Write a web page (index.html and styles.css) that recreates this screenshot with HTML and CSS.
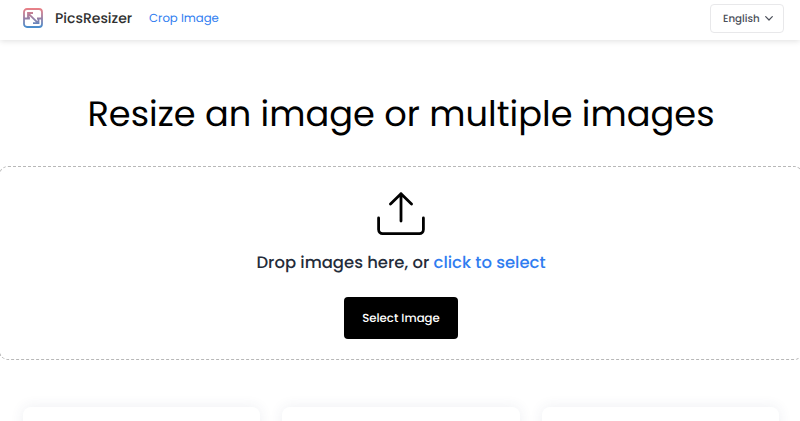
FILE: index.html
```html
<!DOCTYPE html>
<html lang="en">
<head>
<meta charset="utf-8">
<title>PicsResizer</title>
<link rel="stylesheet" href="styles.css">
</head>
<body>
<header class="header">
  <a class="brand">
    <svg class="logo" viewBox="0 0 20 20" fill="none" stroke="url(#g)" stroke-width="1.8">
      <defs><linearGradient id="g" gradientUnits="userSpaceOnUse" x1="0" y1="0" x2="0" y2="20"><stop offset="0" stop-color="#ee8085"/><stop offset=".48" stop-color="#9b7ea2"/><stop offset="1" stop-color="#438ed0"/></linearGradient></defs>
      <rect x="1" y="1" width="18" height="18" rx="3"/>
      <path d="M1 10.5h5v-2M19 10.5h-5M5 9.5V5h5M5.2 5.3l9.4 9.4M15.5 10v5.2h-5.5"/>
    </svg>
    <span class="name">PicsResizer</span>
  </a>
  <a class="nav">Crop Image</a>
  <button class="language"><span>English</span>
    <svg class="chevron" viewBox="0 0 8 5" fill="none" stroke="currentColor" stroke-width="1.2" stroke-linecap="round" stroke-linejoin="round"><path d="M.7.7 4 4 7.3.7"/></svg>
  </button>
</header>
<main>
  <h1 class="title">Resize an image or multiple images</h1>
  <section class="dropzone">
    <svg class="upload" viewBox="0 0 48 44" fill="none" stroke="#000" stroke-width="2.8" stroke-linecap="round" stroke-linejoin="round"><path d="M1.6 26v11.6a4 4 0 0 0 4 4h36.8a4 4 0 0 0 4-4V26M24 29V1.7M13.5 12 24 1.7 34.5 12"/></svg>
    <p class="prompt">Drop images here, or <a class="click">click to select</a></p>
    <button class="select">Select Image</button>
  </section>
  <section class="cards"><div class="card"></div><div class="card"></div><div class="card"></div></section>
</main>
</body>
</html>
```
FILE: styles.css
```css
* { box-sizing: border-box; }
body { margin: 0; height: 421px; overflow: hidden; background: #fff; font-family: Poppins, Inter, sans-serif; text-rendering: geometricPrecision; }
.header { display: flex; align-items: center; height: 40px; padding: 0 16px 4px 23px; box-shadow: 0 1px 6px rgba(0,0,0,.13); }
.brand { display: flex; align-items: center; width: 126px; }
.logo { width: 20px; height: 20px; margin-right: 12px; }
.name { font-size: 14px; font-weight: 500; color: #303030; white-space: nowrap; }
.nav { padding-top: 2px; font-size: 11.7px; color: #2f7df0; white-space: nowrap; }
.language { display: flex; align-items: center; justify-content: space-between; width: 74px; height: 29px; margin-left: auto; padding: 1px 10px 0 12px; border: 1px solid #e8e8ea; border-radius: 4px; background: #fff; font: 500 10.3px Poppins, Inter, sans-serif; color: #4b4f59; text-rendering: inherit; }
.chevron { width: 8px; height: 5px; }
.title { margin: 47px 0 0 2px; height: 56px; line-height: 56px; text-align: center; font-size: 35.2px; font-weight: 400; color: #000; white-space: nowrap; }
.dropzone { display: flex; flex-direction: column; align-items: center; height: 194px; margin: 23px -3px 0 -1px; padding-top: 25px; border: 1px dashed #b8b8b8; border-radius: 9px; }
.upload { width: 48px; height: 44px; flex: none; }
.prompt { margin: 14px 0 0; height: 26px; line-height: 26px; font-size: 16.45px; font-weight: 500; color: #242c3a; white-space: nowrap; }
.click { color: #2f7df0; }
.select { width: 114px; height: 42px; margin-top: 21px; padding: 2px 0 0; border: 0; border-radius: 4px; background: #000; color: #fff; font: 500 11.75px Poppins, Inter, sans-serif; text-rendering: inherit; }
.cards { display: grid; grid-template-columns: repeat(3, 1fr); gap: 22px; height: 61px; padding: 47px 21px 0 23px; overflow: hidden; }
.card { height: 60px; border-radius: 8px; background: #fff; box-shadow: 0 0 14px rgba(60,65,110,.09); }
```
